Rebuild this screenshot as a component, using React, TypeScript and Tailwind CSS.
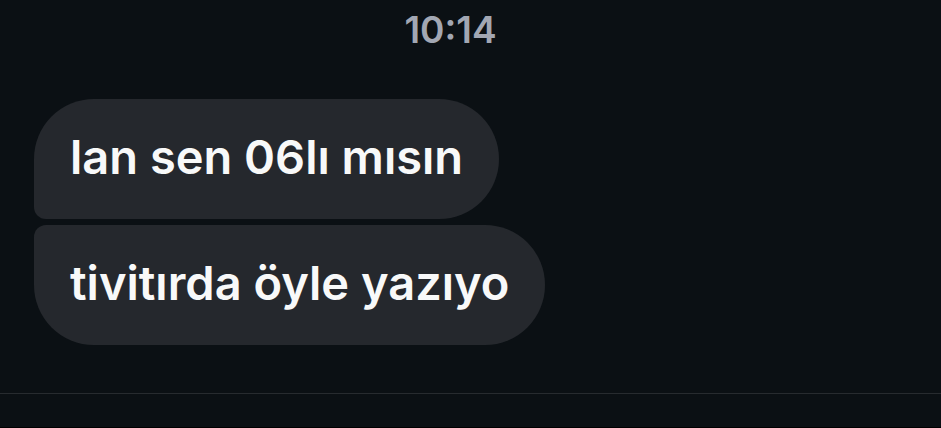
const messages = [
  { id: 1, text: "lan sen 06lı mısın", corners: "rounded-[60px] rounded-bl-[12px]" },
  { id: 2, text: "tivitırda öyle yazıyo", corners: "rounded-[60px] rounded-tl-[12px]" },
];

const App = () => {
  return (
    <div className="flex min-h-screen flex-col bg-[#0b1014] font-['Inter',sans-serif]">
      <main className="flex-1 pt-2 pb-12">
        <div className="pr-10 text-center">
          <time className="text-[37px] leading-[44px] font-semibold text-[#a2a7b3]">10:14</time>
        </div>
        <ul className="mt-[47px] flex flex-col items-start gap-1.5 px-[34px]">
          {messages.map((message) => (
            <li
              key={message.id}
              className={`bg-[#25282d] px-9 pt-7 pb-8 text-[47px] leading-[60px] font-semibold text-[#f8f9f9] ${message.corners}`}
            >
              {message.text}
            </li>
          ))}
        </ul>
      </main>
      <footer className="h-[35px] border-t border-b border-t-[#272b2f] border-b-black" />
    </div>
  );
};

export default App;
